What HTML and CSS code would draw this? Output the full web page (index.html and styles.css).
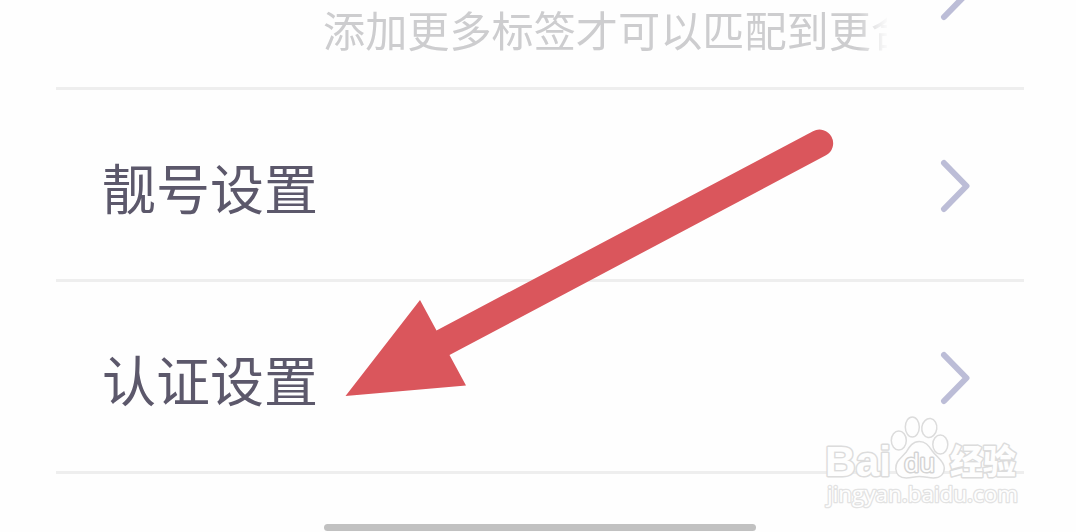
FILE: index.html
```html
<!DOCTYPE html>
<html lang="zh-CN">
<head>
<meta charset="utf-8">
<title>设置</title>
<link rel="stylesheet" href="styles.css">
</head>
<body>
<main class="screen">
  <div class="list">
    <div class="row row-tags">
      <span class="hint">添加更多标签才可以匹配到更合</span>
      <svg class="chevron" viewBox="0 0 32 54"><path d="M5 4 27.500 27 5 50"/></svg>
    </div>
    <div class="row">
      <span class="label">靓号设置</span>
      <svg class="chevron" viewBox="0 0 32 54"><path d="M5 4 27.500 27 5 50"/></svg>
    </div>
    <div class="row">
      <span class="label">认证设置</span>
      <svg class="chevron" viewBox="0 0 32 54"><path d="M5 4 27.500 27 5 50"/></svg>
    </div>
  </div>
  <div class="home-bar"></div>
  <svg class="arrow" viewBox="0 0 500 280">
    <path d="M5.500 276 80 180 96.500 210.500 473 11.300A13.500 13.500 0 0 1 486 35.300L109.500 235 126 265.500Z"/>
  </svg>
  <svg class="watermark" viewBox="0 0 220 110">
    <g class="paw" transform="translate(10.300 0)">
      <ellipse cx="78.500" cy="30.500" rx="7.500" ry="9.500"/>
      <ellipse cx="92" cy="17" rx="7" ry="10"/>
      <ellipse cx="109" cy="18" rx="7.500" ry="9.500" transform="rotate(8 109 18)"/>
      <ellipse cx="120" cy="34.500" rx="7.500" ry="9.500"/>
      <path d="M99 31.500C92 31.500 89 37 86 42C81 48 75 51 75.500 59C76 65 80 68 86 68C91 68 94 66.500 99 66.500C105 66.500 108 68 113 68C120 68 124 64 124 58C124 51 116 47 112 41C108 35 105 31.500 99 31.500Z"/>
    </g>
    <text class="brand" x="15" y="66" textLength="66" lengthAdjust="spacingAndGlyphs">Bai</text>
    <text class="du" x="94" y="62" textLength="31" lengthAdjust="spacingAndGlyphs">du</text>
    <text class="topic" x="140" y="64" textLength="66" lengthAdjust="spacingAndGlyphs">经验</text>
    <text class="site" x="17" y="92" textLength="191" lengthAdjust="spacingAndGlyphs">jingyan.baidu.com</text>
  </svg>
</main>
</body>
</html>
```
FILE: styles.css
```css
body {
  margin: 0;
  background: #fefefe;
  font-family: "Noto Sans CJK SC", sans-serif;
}
.screen {
  position: relative;
  height: 532px;
  overflow: hidden;
}
.list {
  margin: -102px 52px 0 56px;
}
.row {
  box-sizing: border-box;
  height: 192px;
  padding: 3px 53px 0 46px;
  border-bottom: 3px solid #eeeeee;
  display: flex;
  align-items: center;
  justify-content: space-between;
}
.label {
  font-size: 54px;
  line-height: 80px;
  color: #5c586b;
  padding-top: 2px;
}
.hint {
  align-self: flex-end;
  width: 564px;
  margin-left: 221px;
  margin-bottom: 28px;
  overflow: hidden;
  white-space: nowrap;
  font-size: 42.150px;
  font-weight: 400;
  line-height: 60px;
  color: #cdcdcf;
  -webkit-mask-image: linear-gradient(to right, #000 535px, transparent 566px);
  mask-image: linear-gradient(to right, #000 535px, transparent 566px);
}
.chevron {
  flex: none;
  width: 32px;
  height: 54px;
  fill: none;
  stroke: #bcbdd7;
  stroke-width: 6;
  stroke-linecap: round;
  stroke-linejoin: round;
}
.home-bar {
  width: 432px;
  height: 7px;
  margin: 50px 0 0 324px;
  border-radius: 4px;
  background: #c1c1c1;
}
.arrow {
  position: absolute;
  left: 340px;
  top: 120px;
  width: 500px;
  height: 280px;
  fill: #da565c;
}
.watermark {
  position: absolute;
  left: 810px;
  top: 410px;
  width: 220px;
  height: 110px;
  fill: #fefefe;
  stroke: #dcdcdc;
  stroke-width: 1.500;
}
.watermark text {
  paint-order: stroke;
  stroke-width: 3;
  stroke-linejoin: round;
}
.watermark .brand {
  font: 700 42px "Liberation Sans", sans-serif;
}
.watermark .du {
  font: 400 25px "Open Sans", sans-serif;
  stroke: #d4d4d4;
}
.watermark .topic {
  font: 900 34px "Noto Sans CJK SC", sans-serif;
}
.watermark .site {
  font: 400 22px "Open Sans", sans-serif;
  stroke: #e2e2e2;
  stroke-width: 2.500;
}
```
